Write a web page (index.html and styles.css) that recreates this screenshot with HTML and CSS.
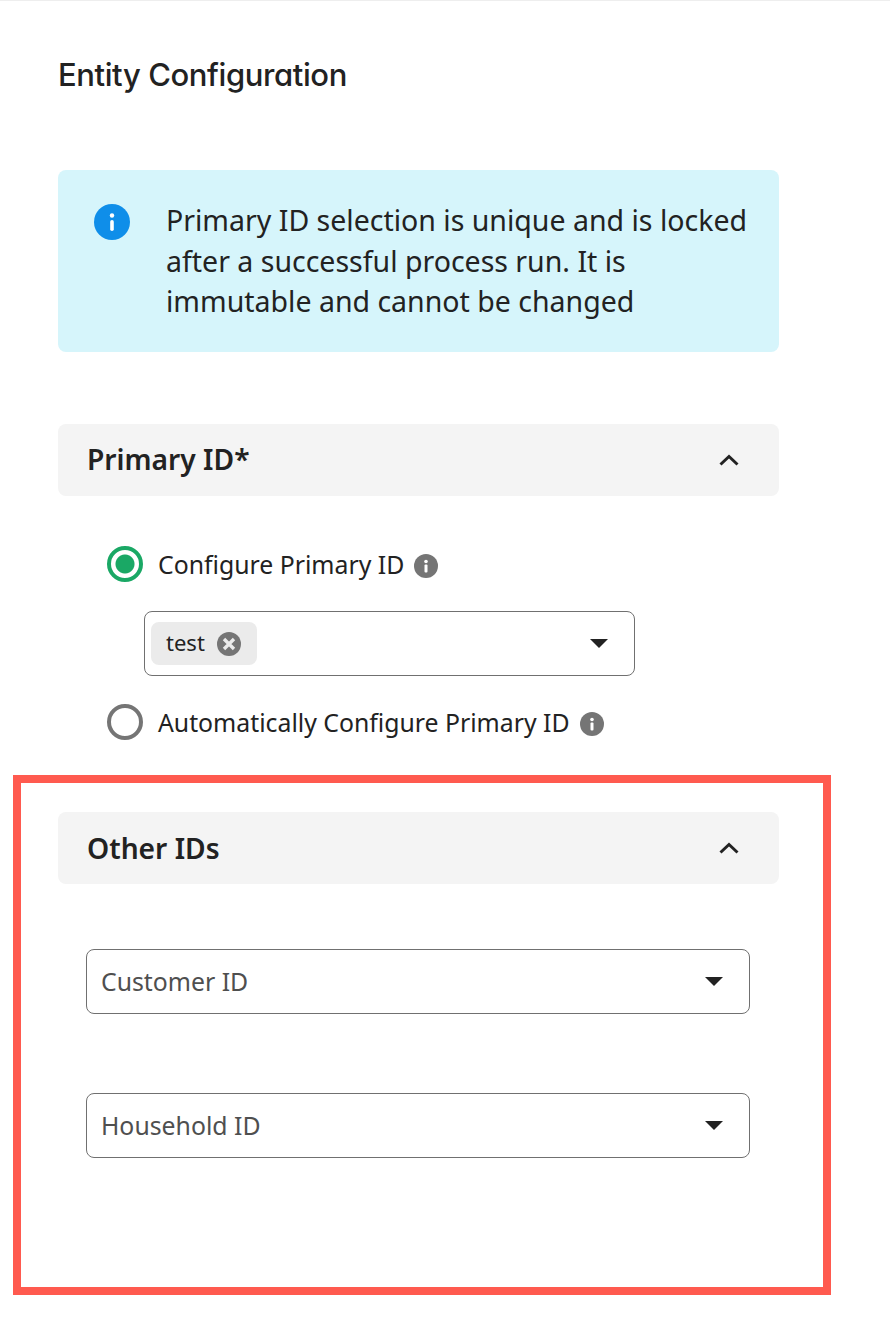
FILE: index.html
```html
<!DOCTYPE html>
<html lang="en">
<head>
    <meta charset="UTF-8">
    <meta name="viewport" content="width=device-width, initial-scale=1.0">
    <title>Entity Configuration</title>
    <link rel="stylesheet" href="styles.css">
</head>
<body>

<div class="page">
    <h1 class="title">Entity Configuration</h1>

    <div class="notice">
        <svg class="notice-icon" viewBox="0 0 36 36">
            <circle cx="18" cy="18" r="18" fill="#0f8ee9"/>
            <circle cx="18" cy="11.5" r="2.2" fill="#fff"/>
            <rect x="16.2" y="16" width="3.6" height="11" rx="1.8" fill="#fff"/>
        </svg>
        <p>Primary ID selection is unique and is locked after a successful process run. It is immutable and cannot be changed</p>
    </div>

    <div class="panel-head primary-head">
        <span>Primary ID*</span>
        <svg class="chevron" viewBox="0 0 20 12"><path d="M1.5 10.500L10 2.500L18.500 10.500" fill="none" stroke="#222" stroke-width="3"/></svg>
    </div>

    <div class="primary-body">
        <div class="radio-row">
            <span class="radio checked"></span>
            <span class="radio-label">Configure Primary ID</span>
            <svg class="hint" viewBox="0 0 24 24">
                <circle cx="12" cy="12" r="12" fill="#757575"/>
                <circle cx="12" cy="7.500" r="1.800" fill="#fff"/>
                <rect x="10.500" y="10.500" width="3" height="8" rx="1" fill="#fff"/>
            </svg>
        </div>

        <div class="select tag-select">
            <span class="tag">
                <span class="tag-text">test</span>
                <svg class="tag-x" viewBox="0 0 24 24">
                    <circle cx="12" cy="12" r="12" fill="#757575"/>
                    <path d="M7 7L17 17M17 7L7 17" stroke="#ebebeb" stroke-width="3.400"/>
                </svg>
            </span>
            <span class="caret"></span>
        </div>

        <div class="radio-row">
            <span class="radio"></span>
            <span class="radio-label">Automatically Configure Primary ID</span>
            <svg class="hint" viewBox="0 0 24 24">
                <circle cx="12" cy="12" r="12" fill="#757575"/>
                <circle cx="12" cy="7.500" r="1.800" fill="#fff"/>
                <rect x="10.500" y="10.500" width="3" height="8" rx="1" fill="#fff"/>
            </svg>
        </div>
    </div>

    <div class="highlight">
        <div class="panel-head">
            <span>Other IDs</span>
            <svg class="chevron" viewBox="0 0 20 12"><path d="M1.5 10.500L10 2.500L18.500 10.500" fill="none" stroke="#222" stroke-width="3"/></svg>
        </div>
        <div class="other-body">
            <div class="select">
                <span class="placeholder">Customer ID</span>
                <span class="caret"></span>
            </div>
            <div class="select">
                <span class="placeholder">Household ID</span>
                <span class="caret"></span>
            </div>
        </div>
    </div>
</div>

</body>
</html>
```

FILE: styles.css
```css
* {
    box-sizing: border-box;
}
body {
    margin: 0;
    background-color: #fff;
    color: #222;
    font-family: "Noto Sans", sans-serif;
    border-top: 1px solid #eee;
}
.page {
    padding: 0 111px 0 58px;
}
.title {
    margin: 0;
    padding-top: 54px;
    height: 169px;
    font-family: Inter, sans-serif;
    font-feature-settings: "cv11";
    font-size: 31px;
    line-height: 40px;
    font-weight: 500;
    letter-spacing: -0.400px;
}
.notice {
    display: flex;
    height: 182px;
    padding: 30px 28px 0 36px;
    background-color: #d6f5fb;
    border-radius: 8px;
}
.notice-icon {
    width: 36px;
    height: 36px;
    margin: 4px 36px 0 0;
    flex: none;
}
.notice p {
    margin: 0;
    font-size: 28.500px;
    line-height: 40.500px;
}
.panel-head {
    display: flex;
    justify-content: space-between;
    align-items: center;
    height: 72px;
    padding: 0 40px 0 29px;
    background-color: #f4f4f4;
    border-radius: 8px;
    font-size: 28.200px;
    font-weight: 600;
}
.panel-head span {
    padding-bottom: 1px;
}
.primary-head {
    margin-top: 72px;
}
.primary-head span {
    padding-bottom: 3px;
}
.chevron {
    width: 20px;
    height: 12px;
}
.primary-body {
    height: 280px;
    padding: 50px 0 0 49px;
}
.radio-row {
    display: flex;
    align-items: center;
    height: 36px;
    font-size: 24.800px;
}
.radio {
    width: 36px;
    height: 36px;
    flex: none;
    border: 4px solid #757575;
    border-radius: 50%;
    margin-right: 15px;
}
.radio.checked {
    border-color: #1aa865;
    background: radial-gradient(circle, #1aa865 0 9px, #fff 10px);
}
.radio-label {
    padding-bottom: 1px;
}
.hint {
    width: 24px;
    height: 24px;
    margin: 3px 0 0 10px;
}
.select {
    display: flex;
    justify-content: space-between;
    align-items: center;
    height: 65px;
    padding: 0 26px 0 14px;
    border: 1px solid #707070;
    border-radius: 8px;
}
.tag-select {
    width: 491px;
    margin: 29px 0 28px 37px;
    padding-left: 6px;
}
.tag {
    display: flex;
    align-items: center;
    height: 43px;
    padding: 0 16px 0 15px;
    background-color: #ebebeb;
    border-radius: 8px;
    font-size: 22px;
}
.tag-text {
    padding-bottom: 3px;
}
.tag-x {
    width: 24px;
    height: 24px;
    margin-left: 12px;
}
.caret {
    width: 0;
    height: 0;
    border-left: 9px solid transparent;
    border-right: 9px solid transparent;
    border-top: 9px solid #222;
}
.placeholder {
    font-size: 24.800px;
    color: #4f4f4f;
    padding-bottom: 2px;
}
/* red annotation box round the Other IDs panel */
.highlight {
    margin: -1px -52px 0 -45px;
    height: 520px;
    padding: 29px 44px 0 37px;
    border: 8px solid #ff5a4f;
}
.other-body {
    display: flex;
    flex-direction: column;
    gap: 79px;
    padding: 65px 29px 0 28px;
}
```
